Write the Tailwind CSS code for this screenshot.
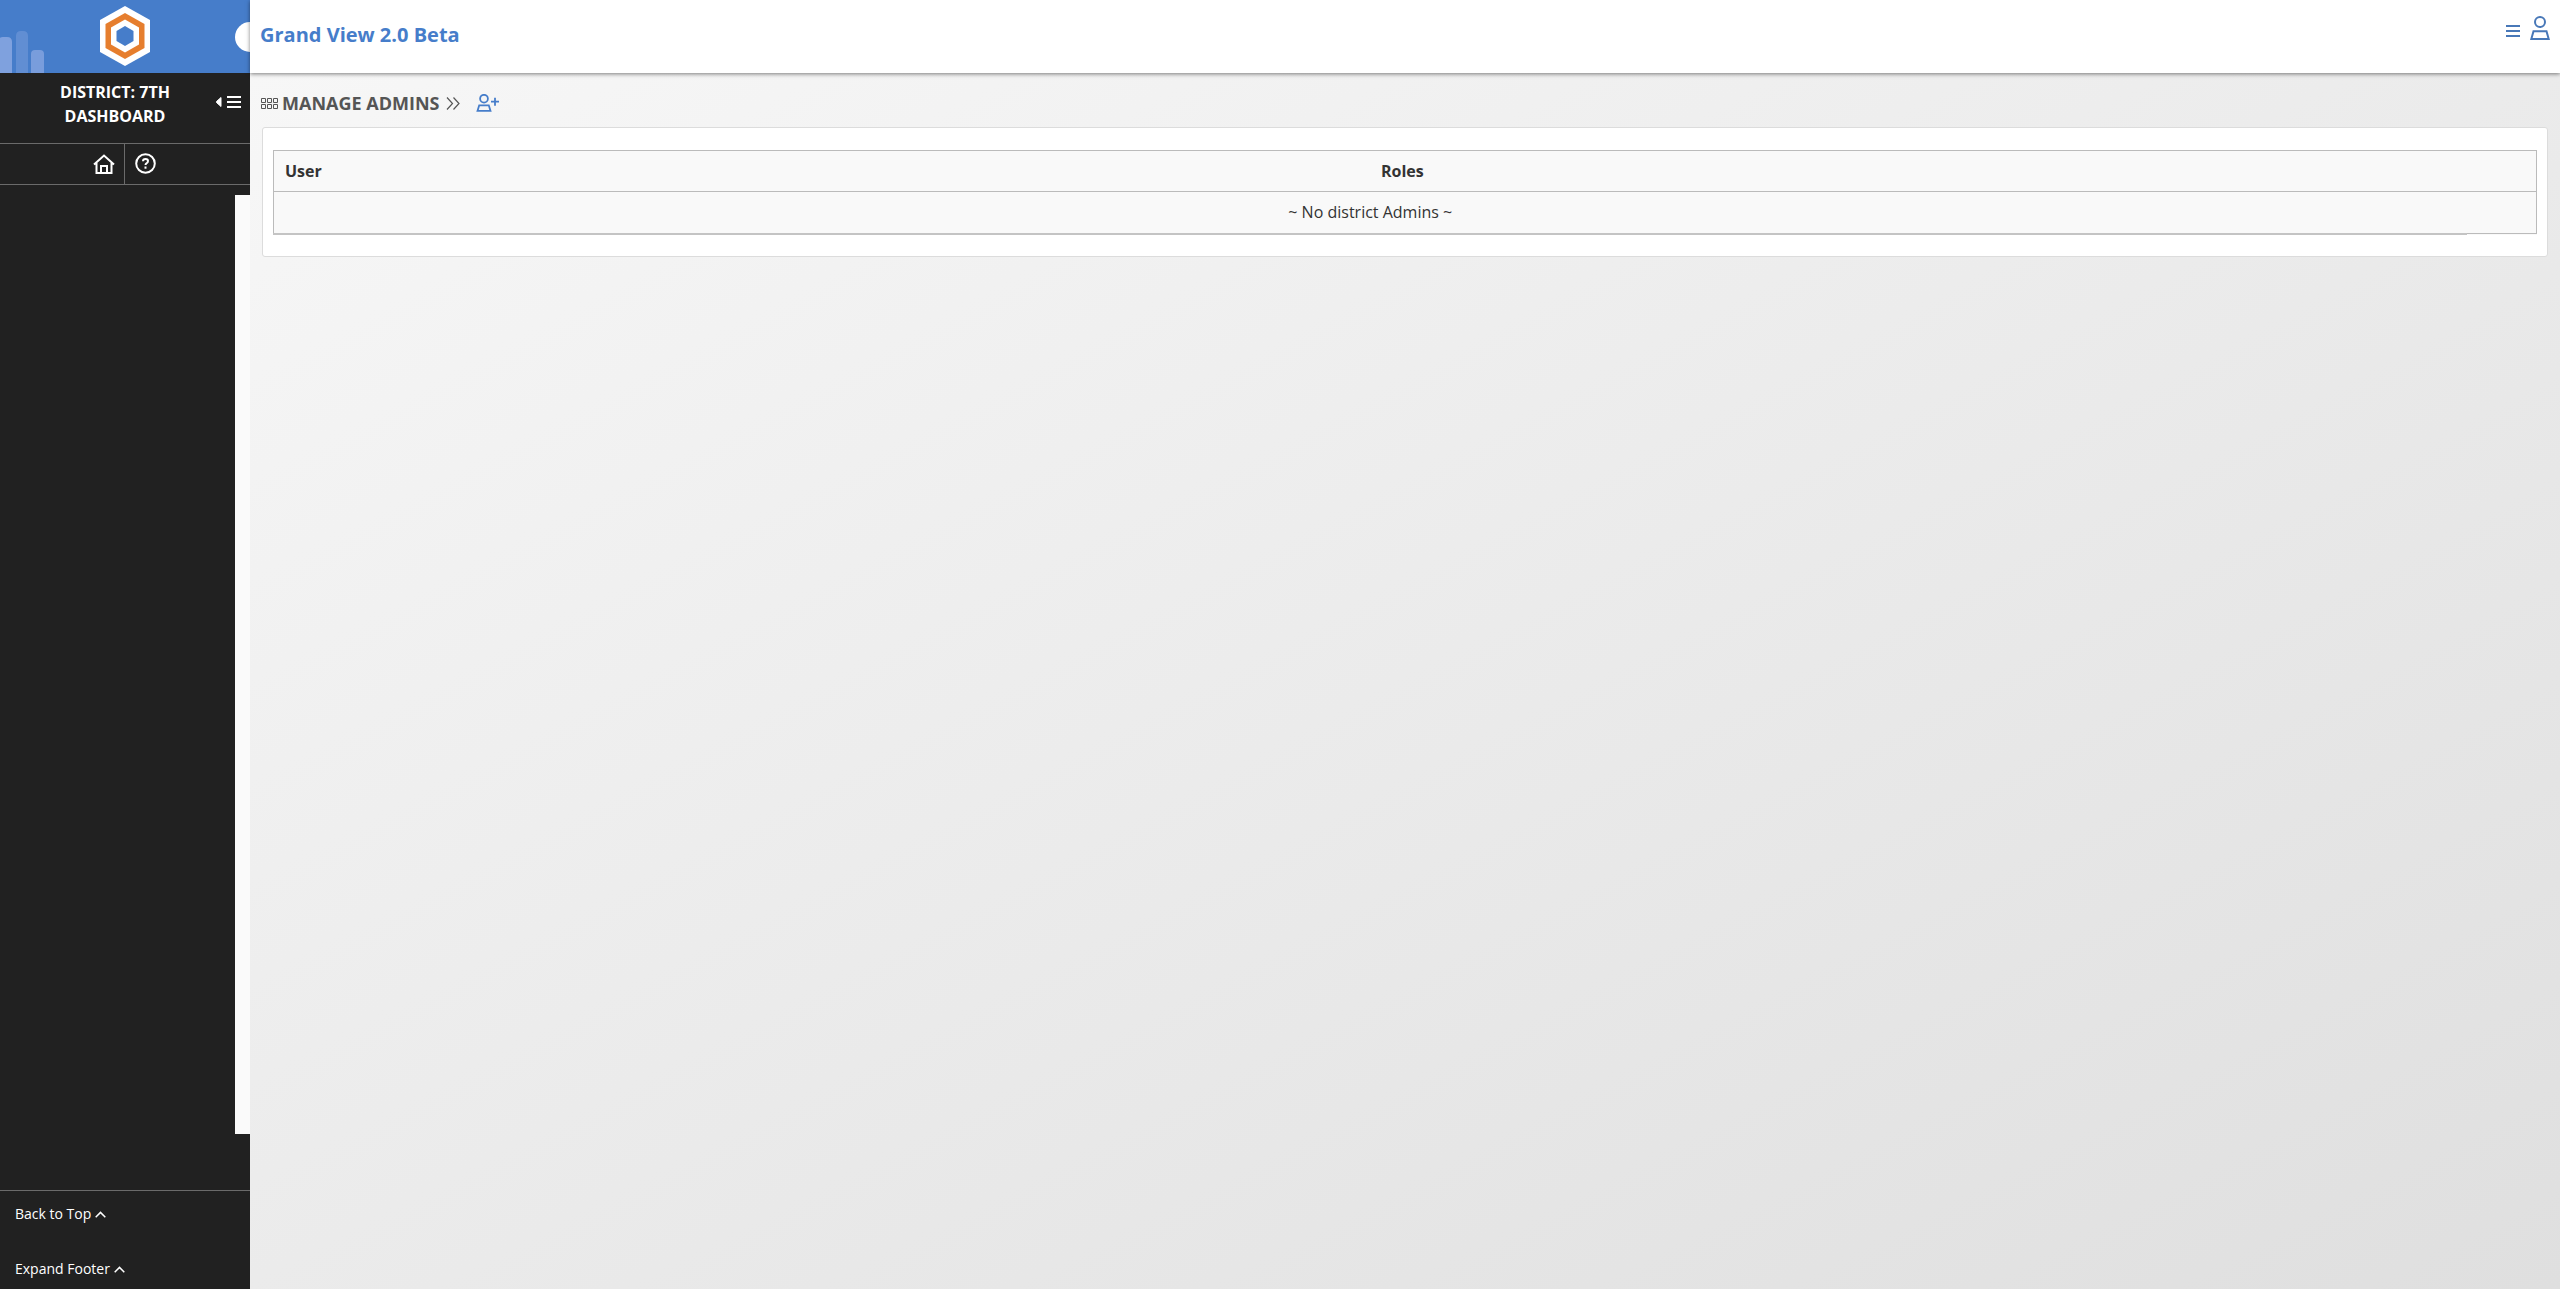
<!DOCTYPE html>
<html lang="en">

<head>
    <meta charset="UTF-8">
    <meta name="viewport" content="width=device-width, initial-scale=1.0">
    <title>Manage Admins</title>
    <script src="https://cdn.jsdelivr.net/npm/@tailwindcss/browser@4"></script>
</head>

<body class="flex min-h-screen bg-[#f5f5f5] font-['Open_Sans','Noto_Sans',sans-serif] text-[#333]">
    <!-- Sidebar -->
    <aside class="flex w-[250px] shrink-0 flex-col bg-[#212121] text-white">
        <div class="relative flex h-[73px] justify-center overflow-hidden bg-[#467dca] pt-[6px]">
            <svg class="absolute bottom-0 left-0" width="44" height="42" viewBox="0 0 44 42" fill="#dcdcff">
                <path d="M-2 42V11q0-5 5-5h4q5 0 5 5v31z" fill-opacity=".38" />
                <path d="M16 42V5q0-5 5-5h2q5 0 5 5v37z" fill-opacity=".18" />
                <path d="M31 42V23q0-4 4-4h5q4 0 4 4v19z" fill-opacity=".34" />
            </svg>
            <a href="#" aria-label="Home page">
                <svg width="50" height="60" viewBox="0 0 50 60">
                    <path d="M25 0l25 14v32L25 60 0 46V14z" fill="#fff" />
                    <path d="M25 7l19.500 11v24L25 53 5.500 42V18z" fill="#e67e2e" />
                    <path d="M25 13.500l14 8v17l-14 8-14-8v-17z" fill="#fff" />
                    <path d="M25 20l8.500 5v10L25 40l-8.500-5V25z" fill="#467dca" />
                </svg>
            </a>
            <span class="absolute top-[22px] -right-[15px] size-[30px] rounded-full bg-white"></span>
        </div>
        <div class="flex h-[71px] border-b border-[#6b6b6b] pt-[7px] pr-2">
            <h2 class="flex-1 pl-4 text-center text-base leading-6 font-bold">DISTRICT: 7TH<br>DASHBOARD</h2>
            <button type="button" class="h-11" aria-label="Collapse menu">
                <svg width="28" height="14" viewBox="0 0 28 14" fill="#fff">
                    <path d="M7 2.500v9L2.500 7.500v-1z" stroke="#fff" stroke-linejoin="round" />
                    <path d="M13 1h14v2H13zM13 6h14v2H13zM13 11h14v2H13z" />
                </svg>
            </button>
        </div>
        <nav class="grid h-[41px] grid-cols-2 border-b border-[#6b6b6b]">
            <a href="#" class="flex items-center justify-end border-r border-[#6b6b6b] pr-[9px] pb-px" aria-label="Home">
                <svg width="22" height="20" viewBox="0 0 22 20" fill="none" stroke="#fff" stroke-width="2">
                    <path d="M1 10.500L11 1.500l10 9M3.500 9v10h15V9M8 19v-7h6v7" />
                </svg>
            </a>
            <a href="#" class="flex items-center pb-px pl-[10px]" aria-label="Help">
                <svg width="21" height="21" viewBox="0 0 21 21" fill="none" stroke="#fff" stroke-width="2">
                    <circle cx="10.500" cy="10.500" r="9.300" />
                    <path d="M8 8.200q0-2.200 2.500-2.200T13 8.100q0 1.300-1.300 2-1.200.6-1.200 2" />
                    <path d="M10.500 13.500v2.200" />
                </svg>
            </a>
        </nav>
        <div class="mt-[10px] mb-14 ml-auto w-[15px] flex-1 bg-[#fafafa]"></div>
        <div class="flex flex-col gap-[35px] border-t border-[#6b6b6b] px-[15px] pt-[13px] pb-[10px] text-sm leading-5">
            <a href="#" class="flex items-center gap-1">Back to Top
                <svg width="11" height="7" viewBox="0 0 11 7" fill="none" stroke="#fff" stroke-width="1.500">
                    <path d="M.7 6.200l4.800-4.800 4.800 4.800" />
                </svg>
            </a>
            <a href="#" class="flex items-center gap-1">Expand Footer
                <svg width="11" height="7" viewBox="0 0 11 7" fill="none" stroke="#fff" stroke-width="1.500">
                    <path d="M.7 6.200l4.800-4.800 4.800 4.800" />
                </svg>
            </a>
        </div>
    </aside>

    <div class="flex min-w-0 flex-1 flex-col">
        <header class="z-10 flex h-[73px] justify-between bg-white px-[10px] text-[#467dca] shadow-[0_1px_4px_rgba(0,0,0,0.5)]">
            <h1 class="pt-[21px] text-xl leading-7 font-bold">Grand View 2.0 Beta</h1>
            <div class="flex gap-[10px] pt-4">
                <button type="button" class="h-[30px]" aria-label="Menu">
                    <svg width="14" height="12" viewBox="0 0 14 12" fill="#4878b8">
                        <path d="M0 0h14v2H0zM0 5h14v2H0zM0 10h14v2H0z" />
                    </svg>
                </button>
                <button type="button" class="h-6" aria-label="Account">
                    <svg width="20" height="24" viewBox="0 0 20 24" fill="none" stroke="#4878b8" stroke-width="2">
                        <circle cx="10" cy="6" r="5" />
                        <path d="M3.500 15.200h13l2.200 7.800H1.300z" />
                    </svg>
                </button>
            </div>
        </header>

        <main class="flex-1 bg-linear-to-br from-[#f7f7f7] to-[#dfdfdf] px-3 pt-4">
            <div class="-ml-px flex h-[38px] items-start text-[#555]">
                <svg class="mt-[9px]" width="17" height="12" viewBox="0 0 17 12" fill="none" stroke="#555">
                    <path d="M.5.500h4v4h-4zM6.500.500h4v4h-4zM12.500.500h4v4h-4zM.5 6.500h4v4h-4zM6.500 6.500h4v4h-4zM12.500 6.500h4v4h-4z" />
                </svg>
                <h2 class="ml-1 text-lg leading-7 font-bold">MANAGE ADMINS</h2>
                <svg class="mt-2 ml-[7px]" width="14" height="13" viewBox="0 0 14 13" fill="none" stroke="#555" stroke-width="1.200">
                    <path d="M1 .5l5.500 6L1 12.500M7.500.5l5.500 6-5.500 6" />
                </svg>
                <button type="button" class="mt-[5px] ml-4" aria-label="Add admin">
                    <svg width="23" height="18" viewBox="0 0 23 18" fill="none" stroke="#467dca" stroke-width="1.800">
                        <circle cx="8" cy="4.700" r="3.900" />
                        <path d="M3.200 11.300h9.600l1.700 5.600h-13zM15 7.700h8M19 3.700v8" />
                    </svg>
                </button>
            </div>
            <section class="rounded-[3px] border border-[#dcdcdc] bg-white px-[10px] pt-[22px] pb-[21px]">
                <table class="w-full table-fixed border-collapse border border-[#bbb] bg-[#f9f9f9] text-base leading-6">
                    <thead>
                        <tr class="h-[41px] border-b border-[#bbb] text-left">
                            <th class="px-[11px]">User</th>
                            <th class="px-[11px]">Roles</th>
                            <th class="w-[70px]"></th>
                        </tr>
                    </thead>
                    <tbody>
                        <tr class="h-[42px]">
                            <td colspan="2" class="border-b-2 border-[#c4c4c4] text-center">~ No district Admins ~</td>
                        </tr>
                    </tbody>
                </table>
            </section>
        </main>
    </div>
</body>

</html>
